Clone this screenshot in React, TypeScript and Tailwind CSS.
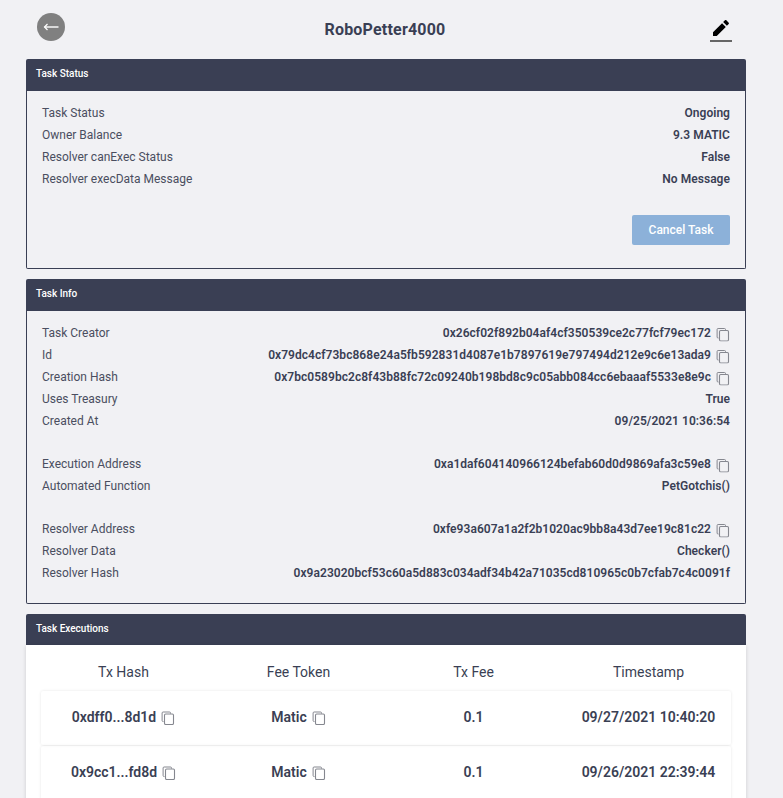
const dark = 'text-[#3a3f54]'

function CopyIcon({ className = 'translate-y-[1.5px]' }: { className?: string }) {
  return (
    <svg viewBox="0 0 14 14" className={`w-[14px] h-[14px] shrink-0 text-[#85878f] ${className}`} fill="none" stroke="currentColor">
      <path d="M2.5 10.5h-.4a1 1 0 0 1-1-1V2a1 1 0 0 1 1-1h6.4a1 1 0 0 1 1 1v.6" strokeWidth="1" />
      <rect x="3.5" y="3" width="9" height="10.5" rx="1.2" strokeWidth="1.1" />
    </svg>
  )
}

function PanelHeader({ title, className = 'h-8 pb-[4px]' }: { title: string; className?: string }) {
  return (
    <div className={`${className} flex items-center px-[10px] bg-[#3a3f54] rounded-t-[2px] text-white text-[10px] font-medium`}>
      {title}
    </div>
  )
}

function Row({ label, value, copy }: { label: string; value: string; copy?: boolean }) {
  return (
    <div className="h-[22px] flex items-center justify-between text-[12px]">
      <span className="text-[#4a4e60]">{label}</span>
      <span className={`flex items-center gap-[5px] font-semibold tracking-[0.04px] ${dark}`}>
        {value}
        {copy && <CopyIcon />}
      </span>
    </div>
  )
}

const executions = [
  { hash: '0xdff0...8d1d', fee: '0.1', time: '09/27/2021 10:40:20' },
  { hash: '0x9cc1...fd8d', fee: '0.1', time: '09/26/2021 22:39:44' },
]

export default function App() {
  return (
    <div className="h-[798px] overflow-hidden bg-[#f1f1f4] pl-[26px] pr-[37px] font-['Roboto',sans-serif]">
      {/* Top bar */}
      <div className="h-[59px] flex items-center justify-between pl-[11px] pr-[13px] pb-[5px]">
        <button className="w-7 h-7 rounded-full bg-[#808080] flex items-center justify-center">
          <svg viewBox="0 0 16 10" className="w-4 h-[10px]" fill="none" stroke="#fff">
            <path d="M1.5 5H15.5" strokeWidth="1.4" />
            <path d="M4.5 2 1.5 5 4.5 8" strokeWidth="1.2" />
          </svg>
        </button>
        <h1 className={`text-base font-bold tracking-[0.2px] mt-[6px] mr-[4px] ${dark}`}>RoboPetter4000</h1>
        <svg viewBox="0 0 24 24" className="w-6 h-6 mt-[5px]">
          <path fill="#000" d="M13.06 5.19l3.75 3.75L7.75 18H4v-3.75l9.06-9.06zm4.82 2.68-3.75-3.75 1.83-1.83c.39-.39 1.02-.39 1.41 0l2.34 2.34c.39.39.39 1.02 0 1.41l-1.83 1.83z" />
          <rect x="1" y="22" width="22" height="2" fill="#666" />
        </svg>
      </div>

      {/* Task Status */}
      <section className="mb-[10px]">
        <PanelHeader title="Task Status" />
        <div className="border border-t-0 border-[#3a3f54] rounded-b-[2px] pt-[11px] pb-[23px] px-[15px]">
          <Row label="Task Status" value="Ongoing" />
          <Row label="Owner Balance" value="9.3 MATIC" />
          <Row label="Resolver canExec Status" value="False" />
          <Row label="Resolver execData Message" value="No Message" />
          <div className="flex justify-end mt-[25px]">
            <button className="w-[98px] h-[30px] rounded-[2px] bg-[#8cb1d9] text-white text-[12px] font-medium">
              Cancel Task
            </button>
          </div>
        </div>
      </section>

      {/* Task Info */}
      <section className="mb-[10px]">
        <PanelHeader title="Task Info" />
        <div className="border border-t-0 border-[#3a3f54] rounded-b-[2px] pt-[11px] pb-[19px] px-[15px]">
          <Row label="Task Creator" value="0x26cf02f892b04af4cf350539ce2c77fcf79ec172" copy />
          <Row label="Id" value="0x79dc4cf73bc868e24a5fb592831d4087e1b7897619e797494d212e9c6e13ada9" copy />
          <Row label="Creation Hash" value="0x7bc0589bc2c8f43b88fc72c09240b198bd8c9c05abb084cc6ebaaaf5533e8e9c" copy />
          <Row label="Uses Treasury" value="True" />
          <Row label="Created At" value="09/25/2021 10:36:54" />
          <div className="h-[21px]" />
          <Row label="Execution Address" value="0xa1daf604140966124befab60d0d9869afa3c59e8" copy />
          <Row label="Automated Function" value="PetGotchis()" />
          <div className="h-[21px]" />
          <Row label="Resolver Address" value="0xfe93a607a1a2f2b1020ac9bb8a43d7ee19c81c22" copy />
          <Row label="Resolver Data" value="Checker()" />
          <Row label="Resolver Hash" value="0x9a23020bcf53c60a5d883c034adf34b42a71035cd810965c0b7cfab7c4c0091f" />
        </div>
      </section>

      {/* Task Executions */}
      <section>
        <PanelHeader title="Task Executions" className="h-[31px] pb-[2px]" />
        <div className="bg-white shadow-[0_1px_4px_rgba(0,0,0,0.15)] px-[10px] pb-4">
          <div className={`grid grid-cols-4 h-[46px] items-center text-center text-sm ${dark} pt-[7px]`}>
            <span>Tx Hash</span>
            <span>Fee Token</span>
            <span>Tx Fee</span>
            <span>Timestamp</span>
          </div>
          <div className="mx-[5px] flex flex-col gap-px">
            {executions.map((ex) => (
              <div key={ex.hash} className="h-[54px] rounded-[2px] shadow-[0_0_3px_rgba(0,0,0,0.1)]">
                <div className={`-mx-[5px] grid grid-cols-4 h-[52px] items-center text-center text-sm font-semibold ${dark}`}>
                  <span className="flex items-center justify-center gap-[5px]">{ex.hash}<CopyIcon className="translate-y-[1px]" /></span>
                  <span className="flex items-center justify-center gap-[5px]">Matic<CopyIcon className="translate-y-[1px]" /></span>
                  <span>{ex.fee}</span>
                  <span>{ex.time}</span>
                </div>
              </div>
            ))}
          </div>
        </div>
      </section>
    </div>
  )
}
